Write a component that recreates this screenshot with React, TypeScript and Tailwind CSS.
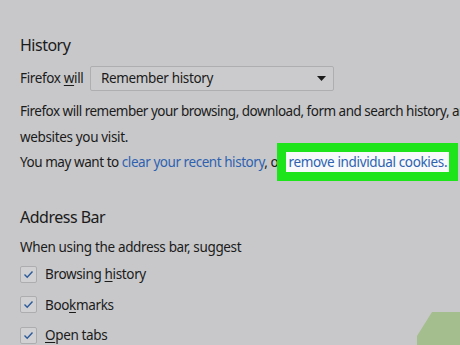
import React from "react";

function Check({ pre = "", u, rest }: { pre?: string; u: string; rest: string }) {
  return (
    <div className="flex items-center h-[30.5px]">
      <div className="w-[17px] h-[17px] border border-[#adadaf] bg-[#d1d1d3] rounded-[2px] flex items-center justify-center">
        <svg width="11" height="9" viewBox="0 0 11 9">
          <path d="M1.5 4.5 L4.2 7.2 L9.5 1.5" fill="none" stroke="#2b5a9a" strokeWidth="1.4" />
        </svg>
      </div>
      <span className="ml-[8px]">
        {pre}
        <span className="underline underline-offset-[2px] decoration-1">{u}</span>
        {rest}
      </span>
    </div>
  );
}

export default function App() {
  return (
    <div className="relative w-[460px] h-[345px] overflow-hidden bg-[#c8c8ca] text-[#1b1b1b] pl-[20px] whitespace-nowrap font-['Noto_Sans','Open_Sans',sans-serif] text-[13.5px] tracking-[-0.35px]">
      <div className="pt-[33px] h-[57px] text-[16px] leading-[24px] tracking-[-0.5px]">History</div>
      <div className="mt-[9px] flex items-center h-[25px]">
        <span className="w-[70px]">
          Firefox <span className="underline underline-offset-[2px] decoration-1">w</span>ill
        </span>
        <div className="w-[244px] h-[25px] border border-[#aeaeb0] bg-[#cbcbcd] rounded-[2px] flex items-center pl-[10px] pr-[7px] justify-between">
          <span>Remember history</span>
          <svg width="9" height="5" viewBox="0 0 9 5">
            <path d="M0 0 H9 L4.5 5 Z" fill="#1b1b1b" />
          </svg>
        </div>
      </div>
      <div className="mt-[8px] leading-[25px]">
        <div className="tracking-[-0.5px]">Firefox will remember your browsing, download, form and search history, and keep cookies from</div>
        <div className="mt-[1px]">websites you visit.</div>
        <div className="tracking-[-0.45px]">
          You may want to <span className="text-[#2e62b0]">clear your recent history</span>, or{" "}
          <span className="relative bg-[#f7f9fb] px-[2px] py-[1px] text-[#2e62b0] tracking-[-0.35px] shadow-[0_0_0_9px_#1ee41b]">
            remove individual cookies.
          </span>
        </div>
      </div>
      <div className="mt-[30px] text-[16px] leading-[24px] tracking-[-0.5px]">Address Bar</div>
      <div className="mt-[6px] leading-[24px]">When using the address bar, suggest</div>
      <div>
        <Check pre="Browsing " u="h" rest="istory" />
        <Check pre="Boo" u="k" rest="marks" />
        <Check u="O" rest="pen tabs" />
      </div>
      <svg className="absolute left-0 top-0" width="460" height="345" viewBox="0 0 460 345">
        <polygon points="432,312 460,312 460,345 417,345 417,336" fill="#a5be8d" />
      </svg>
    </div>
  );
}
